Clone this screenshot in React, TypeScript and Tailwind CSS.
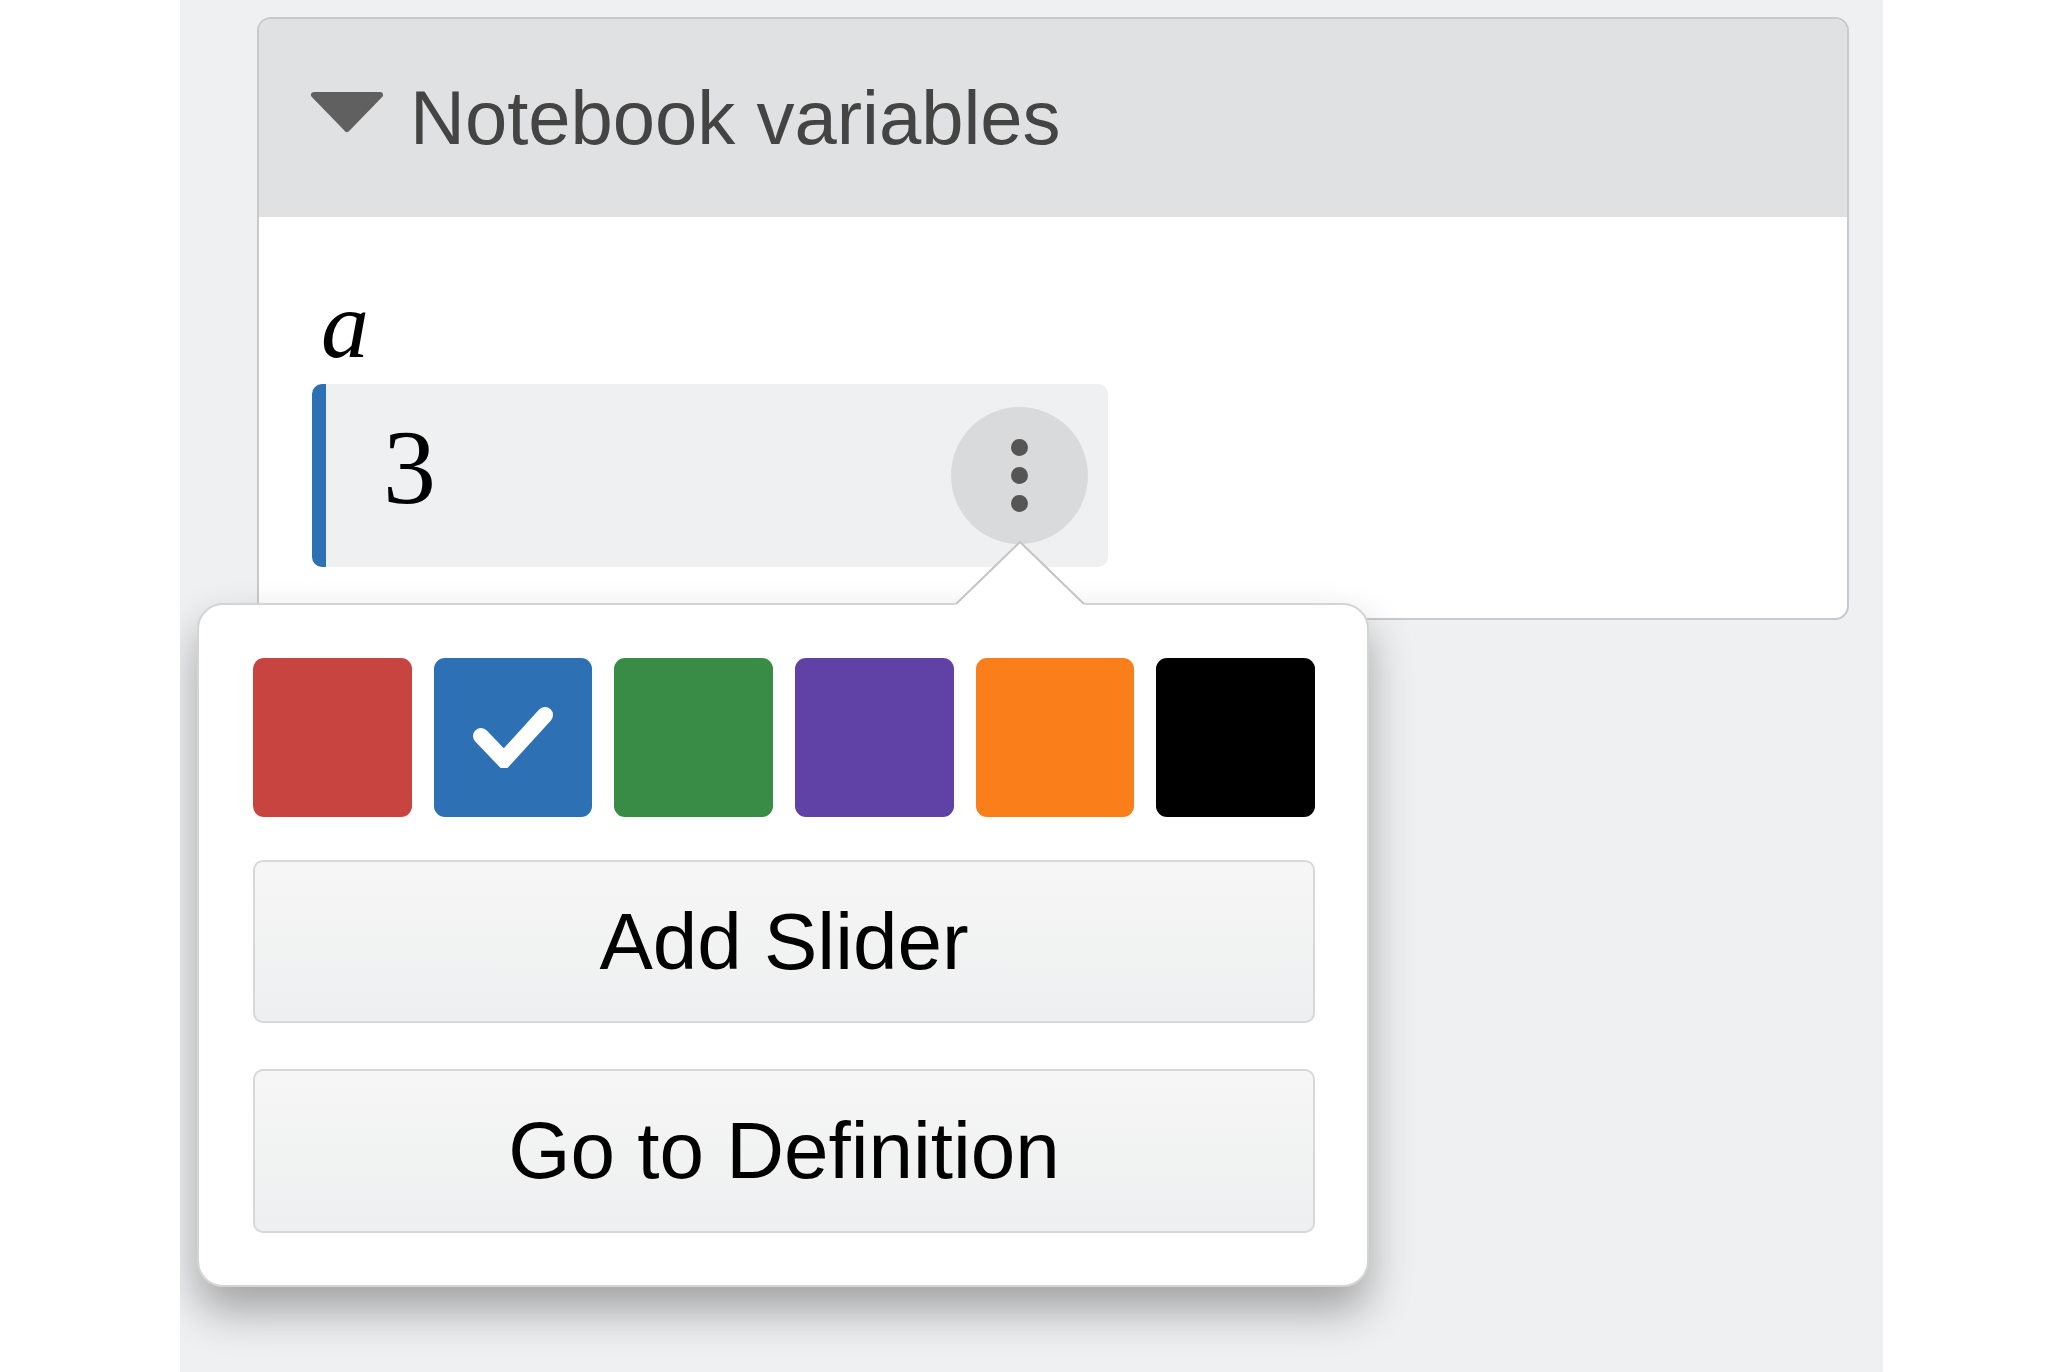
import React from "react";

const swatches = ["#c74440", "#2d70b3", "#388c46", "#6042a6", "#fa7e19", "#000000"];

const App: React.FC = () => {
  return (
    <div className="w-full h-[1372px] bg-white overflow-hidden font-['Liberation_Sans',Arial,sans-serif]">
      <div className="relative ml-[180px] w-[1703px] h-[1372px] bg-[#eff0f1] pt-[17px] overflow-hidden">
        {/* expression panel */}
        <div className="ml-[77px] w-[1592px] h-[603px] border-2 border-[#c9c9c9] rounded-[14px] overflow-hidden bg-white flex flex-col">
          <div className="h-[198px] bg-[#e0e1e2] flex items-center pl-[51px]">
            <svg width="74" height="42" viewBox="0 0 74 42" className="mb-[13px]">
              <polygon points="4,4 70,4 37,38" fill="#606060" stroke="#606060" strokeWidth="6" strokeLinejoin="round" />
            </svg>
            <span className="ml-[26px] text-[76px] leading-none text-[#444444]">Notebook variables</span>
          </div>
          <div className="flex-1 pl-[53px] pt-[60px]">
            <div className="ml-[9px] text-[96px] leading-none italic text-black font-['Liberation_Serif',serif]">a</div>
            <div className="mt-[11px] w-[796px] h-[183px] bg-[#eff0f1] rounded-[10px] border-l-[14px] border-[#2d70b3] flex items-center justify-between pl-[57px] pr-[20px]">
              <span className="mb-[16px] text-[106px] leading-none text-black font-['Liberation_Serif',serif]">3</span>
              <button className="w-[137px] h-[137px] rounded-full bg-[#d9dadb] flex flex-col items-center justify-center gap-[11px]">
                <span className="w-[17px] h-[17px] rounded-full bg-[#555555]" />
                <span className="w-[17px] h-[17px] rounded-full bg-[#555555]" />
                <span className="w-[17px] h-[17px] rounded-full bg-[#555555]" />
              </button>
            </div>
          </div>
        </div>

        {/* options popover */}
        <div className="absolute left-[17px] top-[603px] w-[1172px] h-[684px] bg-white border-2 border-[#d4d4d4] rounded-[26px] shadow-[0_24px_44px_rgba(0,0,0,0.32)] pl-[54px] pt-[53px]">
          <svg width="132" height="66" viewBox="0 0 132 66" className="absolute left-[755px] top-[-65px]">
            <polygon points="0,66 2,64 66,2 130,64 132,66" fill="#ffffff" />
            <polyline points="2,64 66,2 130,64" fill="none" stroke="#c4c4c4" strokeWidth="2" />
          </svg>
          <div className="w-[1062px] grid grid-cols-6 gap-x-[22px] h-[159px]">
            {swatches.map((c, i) => (
              <div
                key={c}
                className="rounded-[11px] flex items-center justify-center"
                style={{ backgroundColor: c }}
              >
                {i === 1 && (
                  <svg width="84" height="61" viewBox="0 0 84 61">
                    <polyline
                      points="10,29 33,53 74,8"
                      fill="none"
                      stroke="#ffffff"
                      strokeWidth="16"
                      strokeLinecap="round"
                    />
                  </svg>
                )}
              </div>
            ))}
          </div>
          <button className="mt-[43px] w-[1062px] h-[163px] border-2 border-[#d8d8d8] rounded-[10px] bg-linear-to-b from-[#f6f6f6] to-[#eeeff0] flex items-center justify-center text-[80px] leading-none text-black">
            Add Slider
          </button>
          <button className="mt-[46px] w-[1062px] h-[164px] border-2 border-[#d8d8d8] rounded-[10px] bg-linear-to-b from-[#f6f6f6] to-[#eeeff0] flex items-center justify-center text-[80px] leading-none text-black">
            Go to Definition
          </button>
        </div>
      </div>
    </div>
  );
};

export default App;
